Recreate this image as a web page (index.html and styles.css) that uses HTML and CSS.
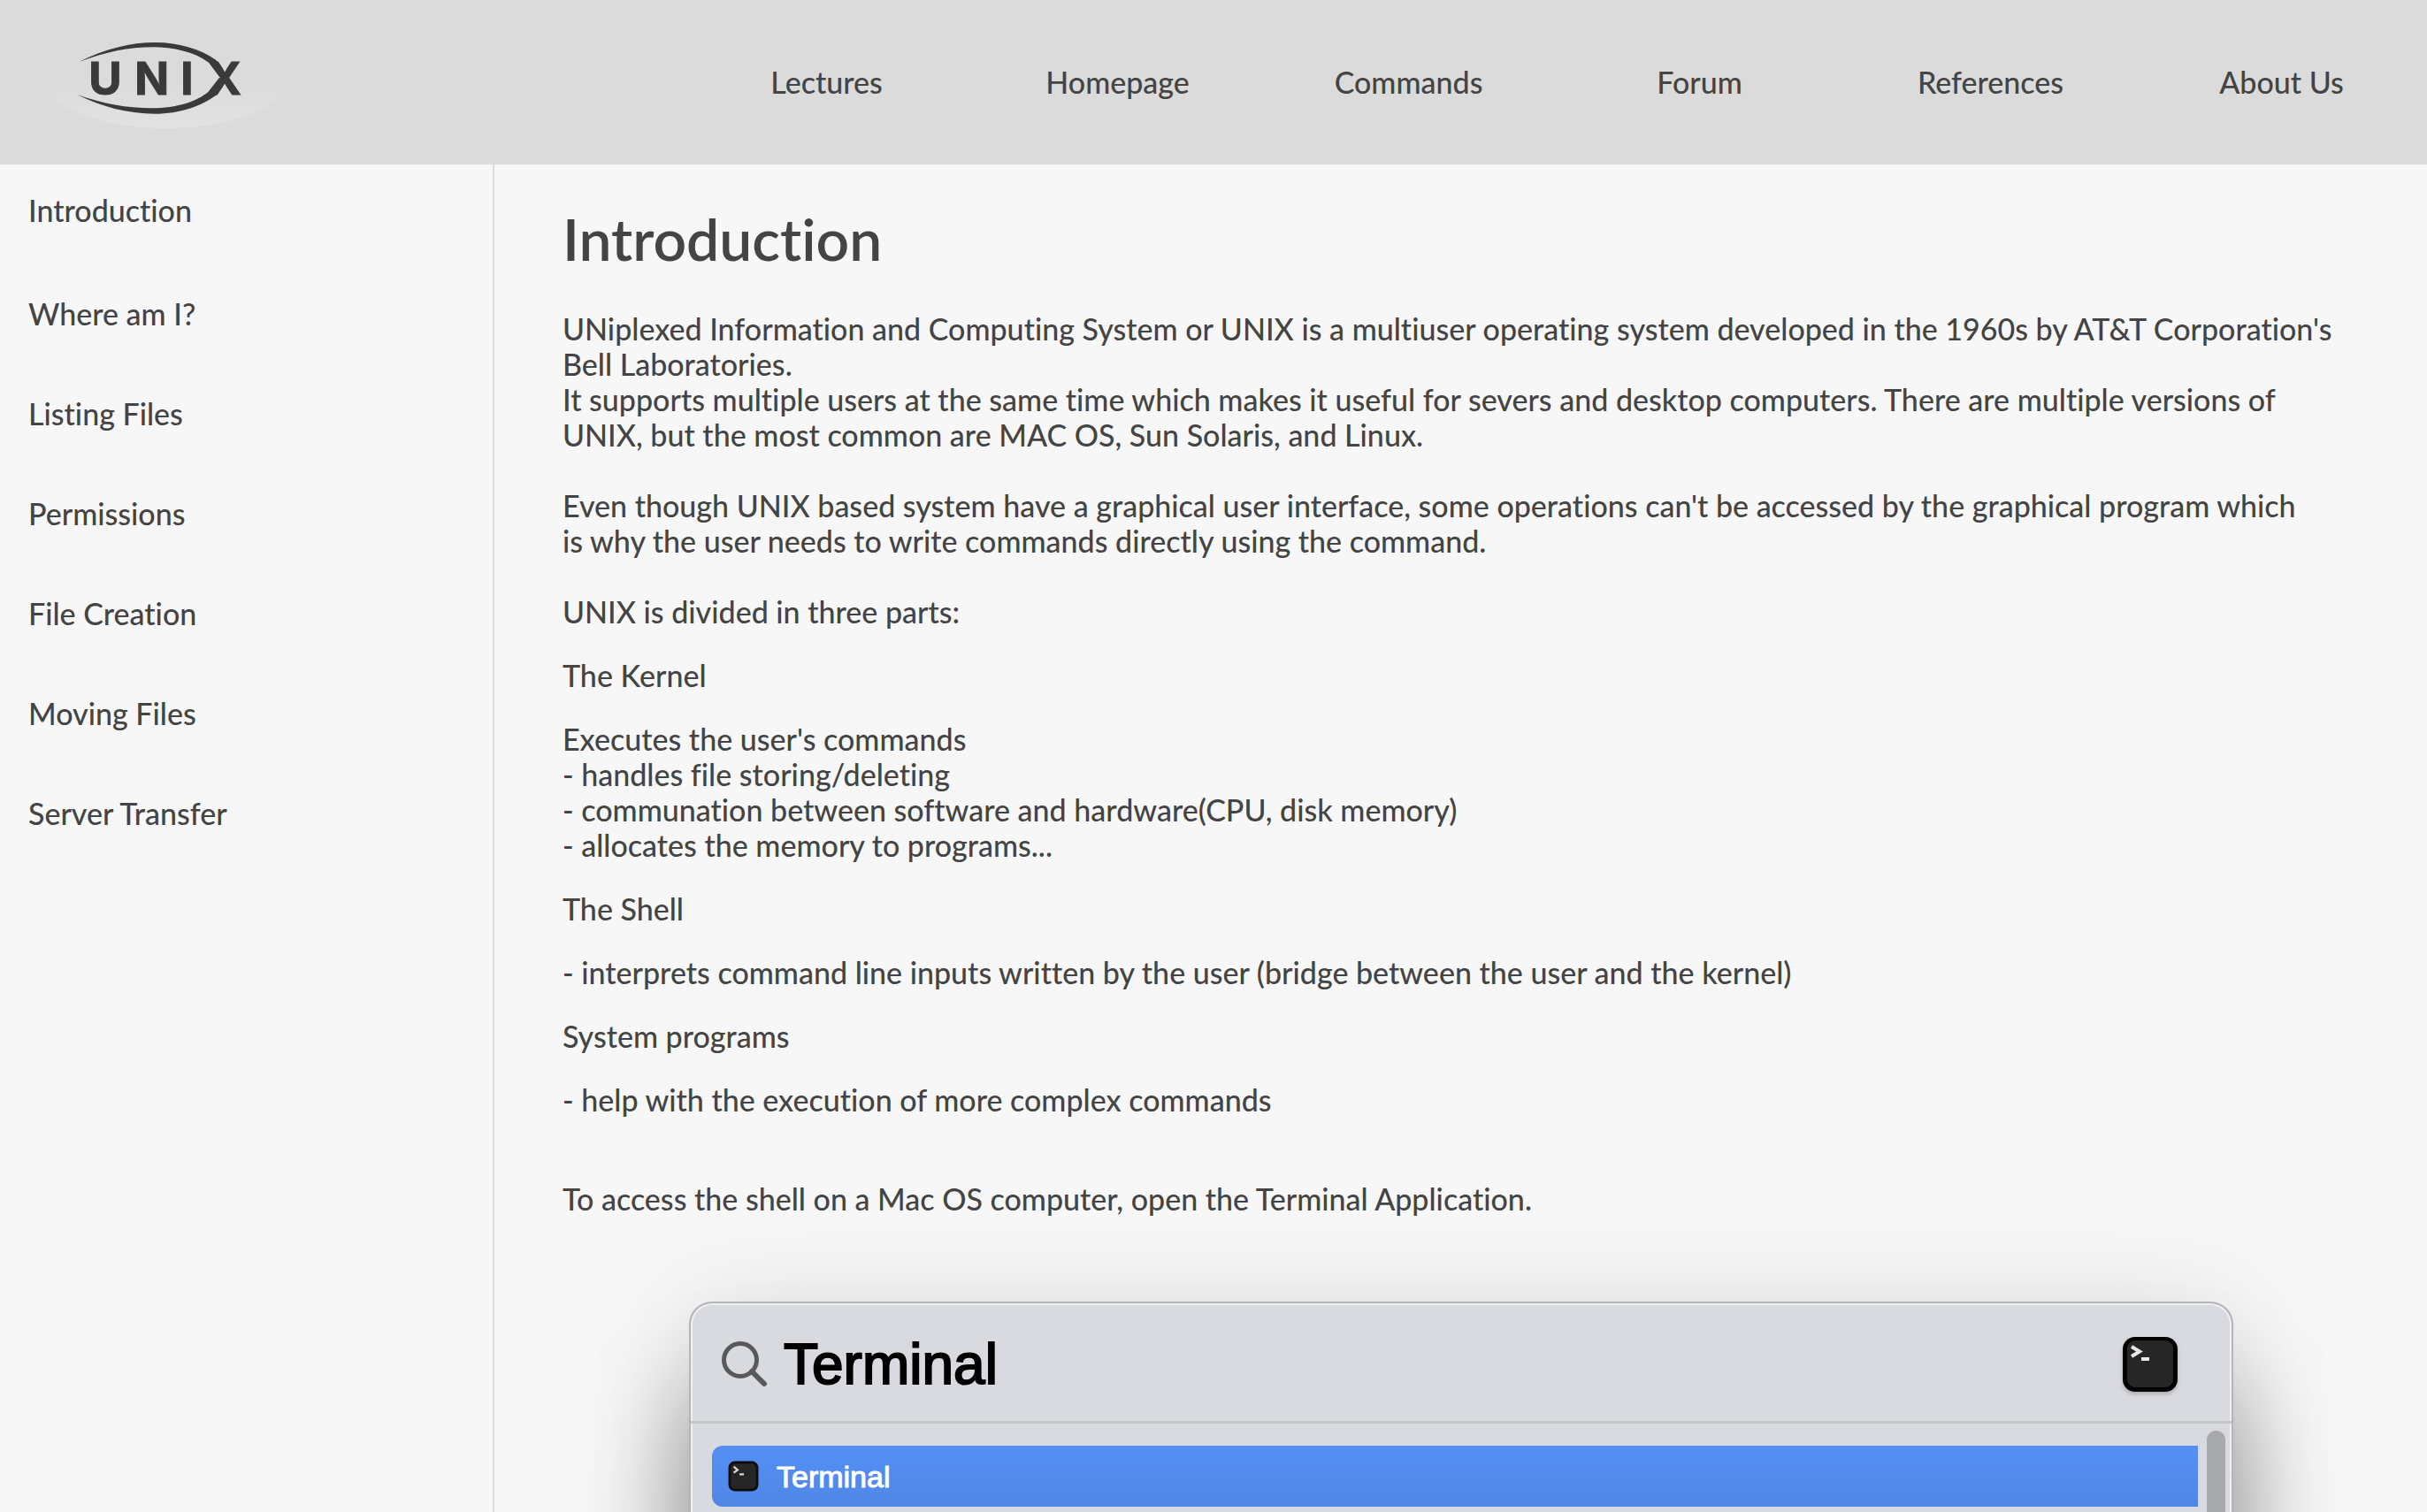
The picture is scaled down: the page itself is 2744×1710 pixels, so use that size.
FILE: index.html
```html
<!DOCTYPE html>
<html lang="en">
<head>
<meta charset="utf-8">
<meta name="viewport" content="width=device-width, initial-scale=1">
<title>UNIX - Introduction</title>
<link rel="stylesheet" href="styles.css">
</head>
<body>
<header class="header">
  <a class="logo" href="#" aria-label="UNIX home">
    <svg class="logo-art" viewBox="0 0 900 438">
      <defs>
        <linearGradient id="halo" x1="0" y1="0" x2="0" y2="1">
          <stop offset="0.55" stop-color="#dbdbdb"/>
          <stop offset="1" stop-color="#e2e2e2"/>
        </linearGradient>
      </defs>
      <ellipse cx="443" cy="205" rx="418" ry="170" fill="url(#halo)"/>
      <path fill="#3a3a3a" d="M148 150C235 106 325 84 405 84C490 84 562 108 610 142Q617 147 622 156L642 188L626 203L588 152C540 116 465 100 400 100C315 100 240 116 148 150Z"/>
      <path fill="#3a3a3a" d="M143 262C230 292 310 307 395 307C480 307 548 284 586 252L624 203L642 218L616 260C565 300 490 326 405 326C310 326 225 302 143 262Z"/>
      <text class="logo-text" x="181 337 493 586" y="261">UNIX</text>
    </svg>
  </a>
  <nav class="nav">
    <a href="#">Lectures</a>
    <a href="#">Homepage</a>
    <a href="#">Commands</a>
    <a href="#">Forum</a>
    <a href="#">References</a>
    <a href="#">About Us</a>
  </nav>
</header>
<div class="page">
  <aside class="sidebar">
    <a class="current" href="#intro">Introduction</a>
    <a href="#">Where am I?</a>
    <a href="#">Listing Files</a>
    <a href="#">Permissions</a>
    <a href="#">File Creation</a>
    <a href="#">Moving Files</a>
    <a href="#">Server Transfer</a>
  </aside>
  <main class="content">
    <h1 id="intro">Introduction</h1>
    <p>UNiplexed Information and Computing System or UNIX is a multiuser operating system developed in the 1960s by AT&amp;T Corporation's Bell Laboratories.<br>
      It supports multiple users at the same time which makes it useful for severs and desktop computers. There are multiple versions of UNIX, but the most common are MAC OS, Sun Solaris, and Linux.<br><br>
      Even though UNIX based system have a graphical user interface, some operations can't be accessed by the graphical program which<br>
      is why the user needs to write commands directly using the command.<br><br>
      UNIX is divided in three parts:</p>
    <p>The Kernel</p>
    <p>Executes the user's commands<br>
      - handles file storing/deleting<br>
      - communation between software and hardware(CPU, disk memory)<br>
      - allocates the memory to programs...</p>
    <p>The Shell</p>
    <p>- interprets command line inputs written by the user (bridge between the user and the kernel)</p>
    <p>System programs</p>
    <p>- help with the execution of more complex commands<br><br></p>
    <p>To access the shell on a Mac OS computer, open the Terminal Application.</p>
    <div class="spotlight">
      <div class="search">
        <svg class="search-icon" viewBox="0 0 52 52" fill="none" stroke="#58595d" stroke-width="5"><circle cx="21" cy="21" r="18.500"/><path d="M34 34L48 48" stroke-width="6" stroke-linecap="round"/></svg>
        <input class="search-input" type="text" value="Terminal" aria-label="Search">
        <svg class="app-icon" viewBox="0 0 64 66"><rect x="1" y="2" width="62" height="62" rx="14" fill="#000"/><rect x="6" y="6" width="52" height="53" rx="9" fill="#262626"/><path d="M11 13L20 18.500L11 24M22 27H31" fill="none" stroke="#e8e8e8" stroke-width="4"/></svg>
      </div>
      <div class="results">
        <button class="result" type="button">
          <svg class="result-icon" viewBox="0 0 64 64"><rect x="1" y="1" width="62" height="62" rx="13" fill="#0b0b0b"/><rect x="6" y="6" width="52" height="52" rx="9" fill="#262626"/><path d="M12 12L20 19L12 25M24 28H33" fill="none" stroke="#d8d8d8" stroke-width="4"/></svg>
          Terminal
        </button>
        <div class="scroll-thumb"></div>
      </div>
    </div>
  </main>
</div>
</body>
</html>
```
FILE: styles.css
```css
* { box-sizing: border-box; }

body {
  margin: 0;
  height: 100vh;
  display: flex;
  flex-direction: column;
  background: #f7f7f7;
  color: #444;
  font: 500 34px/40px Lato, sans-serif;
  font-variant-ligatures: none;
}

a { color: inherit; text-decoration: none; }

.header {
  flex: none;
  display: flex;
  justify-content: space-between;
  align-items: center;
  height: 186px;
  padding-left: 40px;
  background: #dbdbdb;
}

.logo-art { display: block; width: 300px; height: 146px; }

.logo-text {
  font: 700 153px Inter, sans-serif;
  fill: #3a3a3a;
  stroke: #3a3a3a;
  stroke-width: 3px;
}

.nav {
  display: grid;
  grid-template-columns: repeat(6, 1fr);
  width: 73%;
  text-align: center;
}

.page { flex: 1; display: flex; min-height: 0; }

.sidebar {
  flex: none;
  display: flex;
  flex-direction: column;
  gap: 73px;
  width: 559px;
  padding: 32px;
  border-right: 2px solid #dbdbdb;
}

.current { margin-bottom: 4px; }

.content {
  flex: 1;
  padding: 44px 76px 0 77px;
  overflow-y: auto;
  scrollbar-width: none;
}

h1 {
  margin: 0 0 42px;
  font-size: 66px;
  font-weight: 600;
  line-height: 80px;
}

p { margin: 0 0 32px; }

.spotlight {
  width: 1746px;
  max-width: 100%;
  height: 900px;
  margin: 96px auto 0;
  overflow: hidden;
  border: 2px solid #b4b5b9;
  border-radius: 26px;
  background: #d9dae0;
  box-shadow: inset 0 0 0 2px #eef0f6, 0 10px 120px rgba(0, 0, 0, 0.12), 0 110px 120px rgba(0, 0, 0, 0.4);
}

.search {
  display: flex;
  align-items: center;
  height: 136px;
  padding: 4px 60px 0 35px;
  border-bottom: 3px solid #c4c5c9;
}

.search-icon { flex: none; width: 52px; height: 52px; }

.search-input {
  flex: 1;
  min-width: 0;
  margin-left: 18px;
  padding: 0;
  border: 0;
  outline: 0;
  background: none;
  color: #000;
  font: 400 64px/80px "Liberation Sans", sans-serif;
  -webkit-text-stroke: 2px #000;
}

.app-icon { flex: none; width: 64px; height: 66px; filter: drop-shadow(0 3px 2px #8888); }

.results {
  display: flex;
  gap: 10px;
  height: 760px;
  padding: 8px 7px 0 24px;
}

.result {
  flex: 1;
  display: flex;
  align-items: center;
  gap: 20px;
  height: 69px;
  margin-top: 17px;
  padding: 0 18px;
  border: 0;
  border-radius: 12px 0 0 12px;
  background: linear-gradient(#558ff5, #5087e6);
  color: #fff;
  font: 400 34px/40px "Liberation Sans", sans-serif;
  -webkit-text-stroke: 1px #fff;
}

.result-icon { width: 35px; height: 35px; }

.scroll-thumb {
  width: 21px;
  border-radius: 10px;
  background: #a8a9ad;
}
```
